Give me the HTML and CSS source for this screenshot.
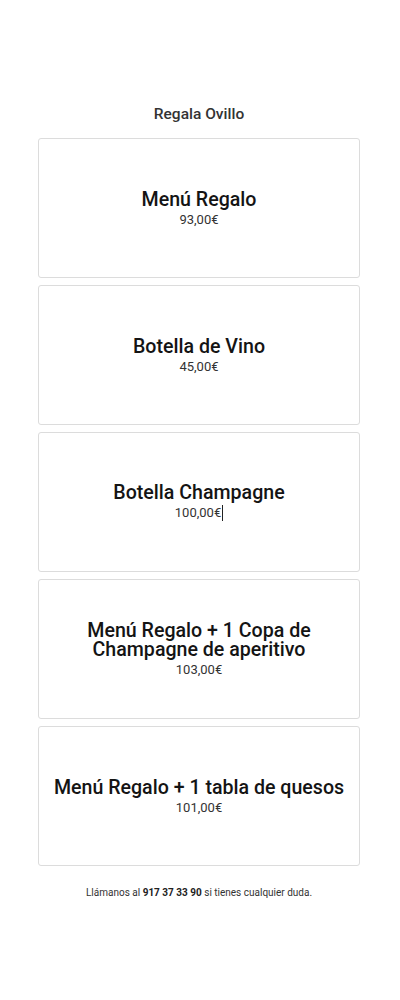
FILE: index.html
```html
<!DOCTYPE html>
<html lang="es">
<head>
<meta charset="utf-8">
<title>Regala Ovillo</title>
<link rel="stylesheet" href="styles.css">
</head>
<body>
<main class="page">
  <h1 class="heading">Regala Ovillo</h1>
  <div class="list">
    <div class="card"><div class="card-title">Menú Regalo</div><div class="price">93,00€</div></div>
    <div class="card"><div class="card-title">Botella de Vino</div><div class="price">45,00€</div></div>
    <div class="card"><div class="card-title">Botella Champagne</div><div class="price">100,00€<span class="caret"></span></div></div>
    <div class="card"><div class="card-title">Menú Regalo + 1 Copa de Champagne de aperitivo</div><div class="price">103,00€</div></div>
    <div class="card"><div class="card-title">Menú Regalo + 1 tabla de quesos</div><div class="price">101,00€</div></div>
  </div>
  <p class="footer">Llámanos al <strong>917 37 33 90</strong> si tienes cualquier duda.</p>
</main>
</body>
</html>
```
FILE: styles.css
```css
html, body {
  margin: 0;
  padding: 0;
  background: #fff;
}
body {
  font-family: Roboto, "Liberation Sans", sans-serif;
  color: #1d1d1f;
}
.page {
  width: 322px;
  margin: 0 40px 0 38px;
  padding-top: 104px;
}
.heading {
  margin: 0 0 14px;
  font-size: 15.5px;
  line-height: 20px;
  font-weight: 500;
  text-align: center;
  color: #333;
}
.list {
  display: flex;
  flex-direction: column;
  gap: 7px;
}
.card {
  box-sizing: border-box;
  height: 140px;
  border: 1px solid #dcdcdc;
  border-radius: 3px;
  display: flex;
  flex-direction: column;
  align-items: center;
  justify-content: center;
  text-align: center;
  padding: 0 8px;
}
.card-title {
  font-size: 19.6px;
  line-height: 19px;
  font-weight: 500;
  color: #141414;
}
.price {
  margin-top: 3px;
  font-size: 13px;
  line-height: 15px;
  color: #333;
}
.caret {
  display: inline-block;
  width: 1px;
  height: 16px;
  background: #222;
  vertical-align: -4px;
  margin-left: 1px;
}
.footer {
  margin: 20px 0 0;
  font-size: 10px;
  line-height: 14px;
  text-align: center;
  color: #333;
}
.footer strong {
  font-weight: 700;
  color: #222;
}
```
